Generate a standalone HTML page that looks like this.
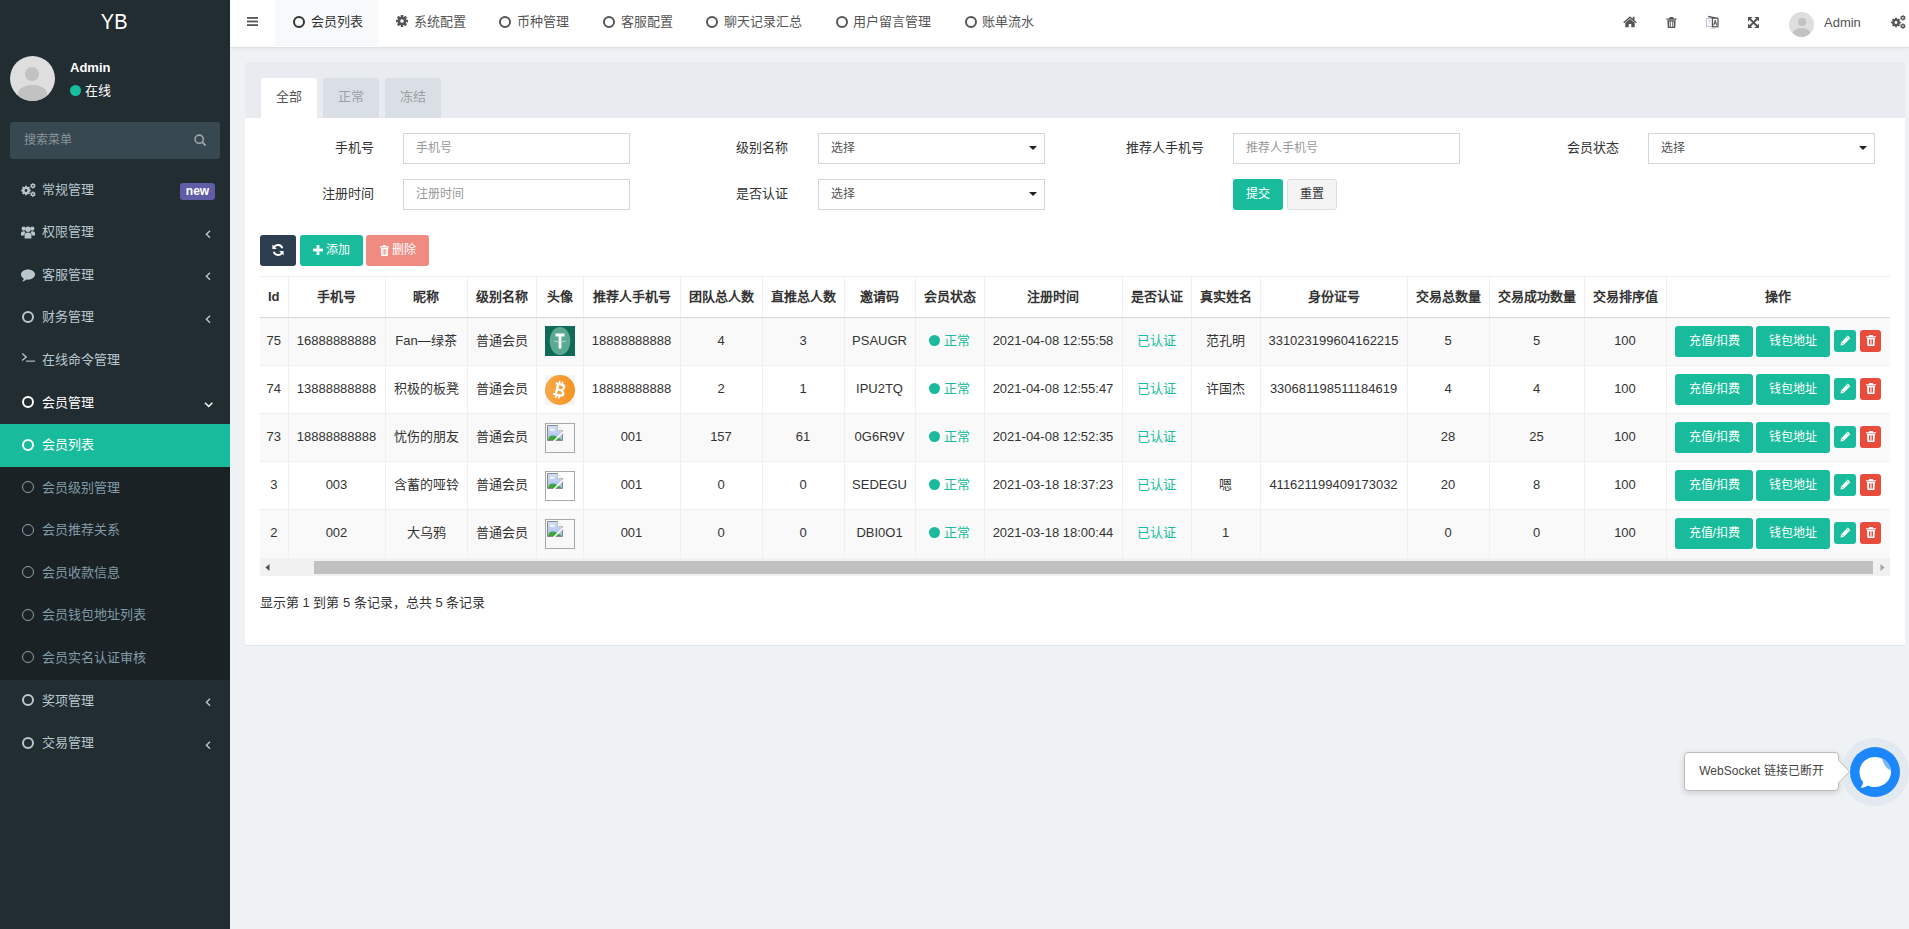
<!DOCTYPE html>
<html lang="zh-CN"><head><meta charset="utf-8"><title>YB</title>
<style>
*{box-sizing:border-box;margin:0;padding:0}
html,body{width:1909px;height:929px;overflow:hidden}
body{font-family:"Liberation Sans",sans-serif;font-size:13px;line-height:1.42857;color:#333;background:#eff2f5;position:relative}
.abs{position:absolute}
/* sidebar */
#side{position:absolute;left:0;top:0;width:230px;height:929px;background:#222d32}
#logo{position:absolute;left:0;top:0;width:228.4px;height:45px;line-height:45px;text-align:center;color:#fff;font-size:20px}
#uimg{position:absolute;left:10px;top:56px;width:45px;height:45px;border-radius:50%;background:#dedede;overflow:hidden}
#uimg .h{position:absolute;left:15px;top:11px;width:14px;height:14px;border-radius:50%;background:#c2c2c2}
#uimg .b{position:absolute;left:8px;top:29px;width:29px;height:17px;border-radius:50%;background:#c2c2c2}
#uname{position:absolute;left:70px;top:59px;color:#fff;font-weight:bold;font-size:13px;line-height:18px}
#ustat{position:absolute;left:70px;top:81.5px;color:#fff;font-size:13px;line-height:18px}
#ustat i{display:inline-block;width:11px;height:11px;border-radius:50%;background:#18bc9c;margin-right:4px;vertical-align:-1px}
#search{position:absolute;left:10px;top:122px;width:210px;height:37px;background:#374850;border-radius:3px}
#search span{position:absolute;left:14px;top:9px;color:#8a9498;font-size:12px;line-height:18px}
#menu{position:absolute;left:0;top:168.8px;width:230px}
.mi{position:relative;height:42.57px;line-height:42.57px;color:#b8c7ce;font-size:13px;padding-left:42px}
.mi .ic{position:absolute;left:21px;top:0;width:14px;height:42.57px}
.ring{position:absolute;left:1px;top:14.5px;width:12px;height:12px;border:2.2px solid #b8c7ce;border-radius:50%}
.mi .arr{position:absolute;left:204.5px;top:0;width:8px;height:42.57px}
.sub{background:#1a2226}
.sub .mi{color:#819aa5}
.sub .ring{border-color:#8aa4af;border-width:1.8px}
.mi.act{background:#18bc9c;color:#fff}
.mi.act .ring{border-color:#fff}
.mi.open{color:#fff}
.mi.open .ring{border-color:#fff}
.badge{position:absolute;right:15px;top:14.5px;width:35px;height:17px;border-radius:3px;background:#605ca8;color:#fff;font-weight:bold;font-size:12px;line-height:17px;text-align:center}
/* header */
#hdr{position:absolute;left:230px;top:0;width:1679px;height:48px;background:#fff;border-bottom:1px solid #dde2e7;box-shadow:0 1px 4px rgba(0,0,0,.05);z-index:2}
#hdr .tab{position:absolute;top:0;height:46px;line-height:42px;color:#555;font-size:13px}
#hdr .tab .ring{border-color:#555;border-width:2px;width:12px;height:12px;top:15.5px;left:0}
#hdr .tab span{position:absolute;top:1px;white-space:nowrap}
/* content */
#panel{position:absolute;left:245px;top:62px;width:1660px;height:583px;background:#fff;border-radius:2px;overflow:hidden;box-shadow:0 1px 1px rgba(0,0,0,.06)}
#phead{position:absolute;left:0;top:0;width:1660px;height:56px;background:#e8ecf0}
.ptab{position:absolute;top:16px;width:56px;height:40px;line-height:37px;text-align:center;background:#d9dfe5;color:#9aa0a6;border-radius:3px 3px 0 0;font-size:13px}
.ptab.on{background:#fff;color:#555}
.lbl{position:absolute;width:150px;text-align:right;font-size:13px;line-height:18px;color:#333}
.inp{position:absolute;width:227px;height:31px;border:1px solid #d2d6de;background:#fff;font-size:12px;line-height:28px;padding-left:12px;color:#999}
.inp.sel{color:#555}
.caret{position:absolute;right:7px;top:12px;width:0;height:0;border-left:4px solid transparent;border-right:4px solid transparent;border-top:4px solid #222}
.btn{position:absolute;border-radius:3px;color:#fff;font-size:12px;text-align:center}
/* table */
#tbl{position:absolute;left:15px;top:214px;border-collapse:collapse;table-layout:fixed}
#tbl th,#tbl td{border-left:1px solid #f0f0f0;text-align:center;white-space:nowrap;overflow:hidden;padding:0}
#tbl th:first-child,#tbl td:first-child{border-left:none}
#tbl th{height:41px;font-weight:bold;border-bottom:1px solid #d8d8d8;border-top:1px solid #eee}
#tbl td{height:48px;border-top:1px solid #f0f0f0}
#tbl tr.st td{background:#f9f9f9}
.g{color:#18bc9c}
.dot{display:inline-block;width:11px;height:11px;border-radius:50%;background:#18bc9c;margin-right:4px;vertical-align:-1px}
.av{display:inline-block;width:30px;height:30px;vertical-align:middle;position:relative;top:-1px}
.bk{border:1px solid #a8a8a8;background:transparent}
.ab{display:inline-block;vertical-align:middle;height:31px;line-height:31px;border-radius:3px;background:#18bc9c;color:#fff;font-size:12px}
.ax{display:inline-block;vertical-align:middle;width:22px;height:22px;border-radius:3px;position:relative;top:-1px}
#scroll{position:absolute;left:15px;top:496px;width:1630px;height:18px;background:#f1f1f1}
#thumb{position:absolute;left:54px;top:3px;width:1559px;height:13px;background:#c1c1c1}
#foot{position:absolute;left:15px;top:531.5px;font-size:13px;line-height:18px;color:#333}
/* chat */
#tip{position:absolute;left:1684px;top:752px;width:155px;height:39px;background:#fff;border:1px solid #bdbdbd;border-radius:4px;box-shadow:0 2px 6px rgba(0,0,0,.15);font-size:12px;line-height:36px;color:#444;text-align:center}
</style></head><body>
<div id="side">
  <div id="logo"><span style="display:inline-block;transform:scaleY(1.07);transform-origin:50% 29px">YB</span></div>
  <div id="uimg"><div class="h"></div><div class="b"></div></div>
  <div id="uname">Admin</div>
  <div id="ustat"><i></i>在线</div>
  <div id="search"><span>搜索菜单</span><svg class="abs" style="left:184px;top:11.5px" width="13" height="13" viewBox="0 0 13 13"><circle cx="5.2" cy="5.2" r="4.1" fill="none" stroke="#9ea5a8" stroke-width="1.6"/><path d="M8.2 8.2 L11.6 11.6" stroke="#9ea5a8" stroke-width="1.9"/></svg></div>
  <div id="menu">
    <div class="mi"><div class="ic"><svg class="abs" style="left:0px;top:14px" width="15" height="14" viewBox="0 0 15 14"><path fill-rule="evenodd" fill="#b8c7ce" d="M3.85 4.09 L4.20 2.67 L5.80 2.67 L6.15 4.09 L6.60 4.28 L7.85 3.51 L8.99 4.65 L8.22 5.90 L8.41 6.35 L9.83 6.70 L9.83 8.30 L8.41 8.65 L8.22 9.10 L8.99 10.35 L7.85 11.49 L6.60 10.72 L6.15 10.91 L5.80 12.33 L4.20 12.33 L3.85 10.91 L3.40 10.72 L2.15 11.49 L1.01 10.35 L1.78 9.10 L1.59 8.65 L0.17 8.30 L0.17 6.70 L1.59 6.35 L1.78 5.90 L1.01 4.65 L2.15 3.51 L3.40 4.28 Z M6.4 7.5 A1.4 1.4 0 1 0 3.6 7.5 A1.4 1.4 0 1 0 6.4 7.5 Z"/><path fill-rule="evenodd" fill="#b8c7ce" d="M11.05 1.09 L11.25 0.18 L12.55 0.18 L12.75 1.09 L13.05 1.26 L13.93 0.97 L14.58 2.10 L13.89 2.73 L13.89 3.07 L14.58 3.70 L13.93 4.83 L13.05 4.54 L12.75 4.71 L12.55 5.62 L11.25 5.62 L11.05 4.71 L10.75 4.54 L9.87 4.83 L9.22 3.70 L9.91 3.07 L9.91 2.73 L9.22 2.10 L9.87 0.97 L10.75 1.26 Z M12.7 2.9 A0.8 0.8 0 1 0 11.1 2.9 A0.8 0.8 0 1 0 12.7 2.9 Z"/><path fill-rule="evenodd" fill="#b8c7ce" d="M11.05 9.29 L11.25 8.38 L12.55 8.38 L12.75 9.29 L13.05 9.46 L13.93 9.17 L14.58 10.30 L13.89 10.93 L13.89 11.27 L14.58 11.90 L13.93 13.03 L13.05 12.74 L12.75 12.91 L12.55 13.82 L11.25 13.82 L11.05 12.91 L10.75 12.74 L9.87 13.03 L9.22 11.90 L9.91 11.27 L9.91 10.93 L9.22 10.30 L9.87 9.17 L10.75 9.46 Z M12.7 11.1 A0.8 0.8 0 1 0 11.1 11.1 A0.8 0.8 0 1 0 12.7 11.1 Z"/></svg></div>常规管理<div class="badge">new</div></div>
    <div class="mi"><div class="ic"><svg class="abs" style="left:0;top:14px" width="14" height="14" viewBox="0 0 14 14"><g fill="#b8c7ce"><circle cx="2.7" cy="3.6" r="2.1"/><circle cx="11.3" cy="3.6" r="2.1"/><path d="M0 10.5 V8.5 Q0 6.3 2.7 6.3 Q3.9 6.3 4.5 6.9 Q3.4 8.2 3.4 10.5 Z"/><path d="M14 10.5 V8.5 Q14 6.3 11.3 6.3 Q10.1 6.3 9.5 6.9 Q10.6 8.2 10.6 10.5 Z"/><circle cx="7" cy="4.3" r="2.7"/><path d="M3.6 13.5 V10.8 Q3.6 7.6 7 7.6 Q10.4 7.6 10.4 10.8 V13.5 Z"/></g></svg></div>权限管理<div class="arr"><svg width="6" height="9" viewBox="0 0 6 9" style="position:absolute;left:0;top:18.5px"><path d="M5 0.8 L1.4 4.3 L5 7.8" fill="none" stroke="#b8c7ce" stroke-width="1.4"/></svg></div></div>
    <div class="mi"><div class="ic"><svg class="abs" style="left:0;top:15px" width="14" height="13" viewBox="0 0 14 13"><path d="M7 0.5 C10.9 0.5 14 2.8 14 5.6 C14 8.4 10.9 10.7 7 10.7 C6.5 10.7 6 10.7 5.5 10.6 C4.4 11.7 2.8 12.3 1 12.4 C1.9 11.6 2.6 10.7 2.7 9.6 C1.1 8.7 0 7.2 0 5.6 C0 2.8 3.1 0.5 7 0.5 Z" fill="#b8c7ce"/></svg></div>客服管理<div class="arr"><svg width="6" height="9" viewBox="0 0 6 9" style="position:absolute;left:0;top:18.5px"><path d="M5 0.8 L1.4 4.3 L5 7.8" fill="none" stroke="#b8c7ce" stroke-width="1.4"/></svg></div></div>
    <div class="mi"><div class="ic"><div class="ring"></div></div>财务管理<div class="arr"><svg width="6" height="9" viewBox="0 0 6 9" style="position:absolute;left:0;top:18.5px"><path d="M5 0.8 L1.4 4.3 L5 7.8" fill="none" stroke="#b8c7ce" stroke-width="1.4"/></svg></div></div>
    <div class="mi"><div class="ic"><svg class="abs" style="left:0;top:13px" width="15" height="10" viewBox="0 0 15 10"><path d="M1.2 1.5 L5.2 5 L1.2 8.5" fill="none" stroke="#b8c7ce" stroke-width="1.3"/><rect x="5" y="8.6" width="9" height="1.1" fill="#b8c7ce"/></svg></div>在线命令管理</div>
    <div class="mi open"><div class="ic"><div class="ring"></div></div>会员管理<div class="arr"><svg width="10" height="6" viewBox="0 0 10 6" style="position:absolute;left:-1px;top:20px"><path d="M1 0.8 L4.7 4.5 L8.4 0.8" fill="none" stroke="#fff" stroke-width="1.4"/></svg></div></div>
    <div class="mi act"><div class="ic"><div class="ring"></div></div>会员列表</div>
    <div class="sub">
      <div class="mi"><div class="ic"><div class="ring"></div></div>会员级别管理</div>
      <div class="mi"><div class="ic"><div class="ring"></div></div>会员推荐关系</div>
      <div class="mi"><div class="ic"><div class="ring"></div></div>会员收款信息</div>
      <div class="mi"><div class="ic"><div class="ring"></div></div>会员钱包地址列表</div>
      <div class="mi"><div class="ic"><div class="ring"></div></div>会员实名认证审核</div>
    </div>
    <div class="mi"><div class="ic"><div class="ring"></div></div>奖项管理<div class="arr"><svg width="6" height="9" viewBox="0 0 6 9" style="position:absolute;left:0;top:18.5px"><path d="M5 0.8 L1.4 4.3 L5 7.8" fill="none" stroke="#b8c7ce" stroke-width="1.4"/></svg></div></div>
    <div class="mi"><div class="ic"><div class="ring"></div></div>交易管理<div class="arr"><svg width="6" height="9" viewBox="0 0 6 9" style="position:absolute;left:0;top:18.5px"><path d="M5 0.8 L1.4 4.3 L5 7.8" fill="none" stroke="#b8c7ce" stroke-width="1.4"/></svg></div></div>
  </div>
</div>
<div id="hdr">
  <svg class="abs" style="left:17px;top:17px" width="11" height="9" viewBox="0 0 11 9"><rect x="0" y="0" width="11" height="1.8" fill="#555"/><rect x="0" y="3.6" width="11" height="1.8" fill="#555"/><rect x="0" y="7.2" width="11" height="1.8" fill="#555"/></svg>
  <div class="abs" style="left:45px;top:0;width:103px;height:46px;background:#f8f9fa"></div>
  <div class="tab" style="left:62.7px"><div class="ring" style="border-color:#333"></div><span style="left:18px;color:#333">会员列表</span></div>
  <div class="tab" style="left:166px"><svg class="abs" style="left:0;top:15px" width="12" height="12" viewBox="0 0 12 12"><g fill="#555"><circle cx="6" cy="6" r="4.2"/><rect x="4.7" y="0" width="2.6" height="12" rx=".4"/><rect x="0" y="4.7" width="12" height="2.6" rx=".4"/><rect x="4.7" y="0" width="2.6" height="12" rx=".4" transform="rotate(45 6 6)"/><rect x="4.7" y="0" width="2.6" height="12" rx=".4" transform="rotate(-45 6 6)"/></g><circle cx="6" cy="6" r="1.8" fill="#fff"/></svg><span style="left:18px">系统配置</span></div>
  <div class="tab" style="left:269.4px"><div class="ring"></div><span style="left:18px">币种管理</span></div>
  <div class="tab" style="left:373px"><div class="ring"></div><span style="left:17.6px">客服配置</span></div>
  <div class="tab" style="left:476px"><div class="ring"></div><span style="left:17.6px">聊天记录汇总</span></div>
  <div class="tab" style="left:605.6px"><div class="ring"></div><span style="left:17.4px">用户留言管理</span></div>
  <div class="tab" style="left:734.7px"><div class="ring"></div><span style="left:17.6px">账单流水</span></div>
  <!-- right icons -->
  <svg class="abs" style="left:1393px;top:16px" width="14" height="12" viewBox="0 0 14 12"><path d="M7 0.3 L0.2 6.2 L1.2 7.2 L7 2.2 L12.8 7.2 L13.8 6.2 L11.5 4.2 L11.5 0.8 L9.8 0.8 L9.8 2.7 Z" fill="#555"/><path d="M2.3 6.8 L7 2.9 L11.7 6.8 L11.7 11.2 L8.3 11.2 L8.3 8 L5.7 8 L5.7 11.2 L2.3 11.2 Z" fill="#555"/></svg>
  <svg class="abs" style="left:1436px;top:17px" width="11" height="11" viewBox="0 0 11 11"><path d="M3.8 0 H7.2 L7.8 1.5 H10.6 V2.8 H0.4 V1.5 H3.2 Z" fill="#555"/><path d="M1.3 3.3 H9.7 L9.2 10.4 Q9.1 11 8.5 11 H2.5 Q1.9 11 1.8 10.4 Z" fill="#555"/><rect x="3.3" y="4.5" width="1" height="5.3" fill="#fff"/><rect x="5" y="4.5" width="1" height="5.3" fill="#fff"/><rect x="6.7" y="4.5" width="1" height="5.3" fill="#fff"/></svg>
  <svg class="abs" style="left:1476px;top:15px" width="13" height="15" viewBox="0 0 13 15"><rect x="0.6" y="3.6" width="6" height="8" fill="#fff" stroke="#b4b0e0" stroke-width=".8"/><path d="M2.2 0.8 L10.5 2.6 L10.5 3.8 L2.2 2.2 Z" fill="#555"/><rect x="6.4" y="3.2" width="5.6" height="8.6" fill="#f4f4f4" stroke="#555" stroke-width="1.2"/><path d="M7.6 10.3 L9.2 5.2 L10.8 10.3" fill="none" stroke="#555" stroke-width="1"/><path d="M8.2 8.6 H10.2" stroke="#555" stroke-width=".8"/><path d="M2.5 5.5 L4.5 5.5 M3.5 4.8 V7 M2.4 9.5 L4.7 7.2" stroke="#b8b0d8" stroke-width=".6" fill="none"/><path d="M4 13.6 H9.2" stroke="#c8c8d8" stroke-width=".8"/></svg>
  <svg class="abs" style="left:1518px;top:17px" width="11" height="11" viewBox="0 0 11 11"><g fill="#555"><path d="M0 0 H4.6 L0 4.6 Z"/><path d="M11 0 V4.6 L6.4 0 Z"/><path d="M0 11 V6.4 L4.6 11 Z"/><path d="M11 11 H6.4 L11 6.4 Z"/></g><path d="M1.5 1.5 L9.5 9.5 M9.5 1.5 L1.5 9.5" stroke="#555" stroke-width="1.9"/></svg>
  <div class="abs" style="left:1559px;top:12px;width:25px;height:25px;border-radius:50%;background:#dedede;overflow:hidden"><div class="abs" style="left:8.5px;top:6px;width:8px;height:8px;border-radius:50%;background:#c2c2c2"></div><div class="abs" style="left:4px;top:16px;width:17px;height:10px;border-radius:50%;background:#c2c2c2"></div></div>
  <div class="abs" style="left:1594px;top:14px;line-height:18px;color:#555;font-size:13px">Admin</div>
  <svg class="abs" style="left:1661px;top:15px" width="15" height="14" viewBox="0 0 15 14"><path fill-rule="evenodd" fill="#555" d="M3.85 4.09 L4.20 2.67 L5.80 2.67 L6.15 4.09 L6.60 4.28 L7.85 3.51 L8.99 4.65 L8.22 5.90 L8.41 6.35 L9.83 6.70 L9.83 8.30 L8.41 8.65 L8.22 9.10 L8.99 10.35 L7.85 11.49 L6.60 10.72 L6.15 10.91 L5.80 12.33 L4.20 12.33 L3.85 10.91 L3.40 10.72 L2.15 11.49 L1.01 10.35 L1.78 9.10 L1.59 8.65 L0.17 8.30 L0.17 6.70 L1.59 6.35 L1.78 5.90 L1.01 4.65 L2.15 3.51 L3.40 4.28 Z M6.4 7.5 A1.4 1.4 0 1 0 3.6 7.5 A1.4 1.4 0 1 0 6.4 7.5 Z"/><path fill-rule="evenodd" fill="#555" d="M11.05 1.09 L11.25 0.18 L12.55 0.18 L12.75 1.09 L13.05 1.26 L13.93 0.97 L14.58 2.10 L13.89 2.73 L13.89 3.07 L14.58 3.70 L13.93 4.83 L13.05 4.54 L12.75 4.71 L12.55 5.62 L11.25 5.62 L11.05 4.71 L10.75 4.54 L9.87 4.83 L9.22 3.70 L9.91 3.07 L9.91 2.73 L9.22 2.10 L9.87 0.97 L10.75 1.26 Z M12.7 2.9 A0.8 0.8 0 1 0 11.1 2.9 A0.8 0.8 0 1 0 12.7 2.9 Z"/><path fill-rule="evenodd" fill="#555" d="M11.05 9.29 L11.25 8.38 L12.55 8.38 L12.75 9.29 L13.05 9.46 L13.93 9.17 L14.58 10.30 L13.89 10.93 L13.89 11.27 L14.58 11.90 L13.93 13.03 L13.05 12.74 L12.75 12.91 L12.55 13.82 L11.25 13.82 L11.05 12.91 L10.75 12.74 L9.87 13.03 L9.22 11.90 L9.91 11.27 L9.91 10.93 L9.22 10.30 L9.87 9.17 L10.75 9.46 Z M12.7 11.1 A0.8 0.8 0 1 0 11.1 11.1 A0.8 0.8 0 1 0 12.7 11.1 Z"/></svg>
</div>
<div id="panel">
  <div id="phead">
    <div class="ptab on" style="left:16px">全部</div>
    <div class="ptab" style="left:78px">正常</div>
    <div class="ptab" style="left:140px">冻结</div>
  </div>
<div class="lbl" style="left:-21.5px;top:77.0px">手机号</div>
<div class="lbl" style="left:393.3px;top:77.0px">级别名称</div>
<div class="lbl" style="left:808.5px;top:77.0px">推荐人手机号</div>
<div class="lbl" style="left:1223.6px;top:77.0px">会员状态</div>
<div class="lbl" style="left:-21.5px;top:123.0px">注册时间</div>
<div class="lbl" style="left:393.3px;top:123.0px">是否认证</div>
<div class="inp" style="left:158px;top:71px">手机号</div>
<div class="inp sel" style="left:573px;top:71px">选择<i class="caret"></i></div>
<div class="inp" style="left:988px;top:71px">推荐人手机号</div>
<div class="inp sel" style="left:1403px;top:71px">选择<i class="caret"></i></div>
<div class="inp" style="left:158px;top:117px">注册时间</div>
<div class="inp sel" style="left:573px;top:117px">选择<i class="caret"></i></div>
<div class="btn" style="left:988px;top:117px;width:50px;height:31px;line-height:31px;background:#18bc9c">提交</div>
<div class="btn" style="left:1042px;top:117px;width:50px;height:31px;line-height:29px;background:#f4f4f4;border:1px solid #ddd;color:#333">重置</div>
<div class="btn" style="left:15px;top:173px;width:36px;height:31px;background:#2c3e50"><svg class="abs" style="left:12px;top:9px" width="12" height="12" viewBox="0 0 12 12"><path d="M10.3 4.2 A4.6 4.6 0 0 0 1.9 3.4" fill="none" stroke="#fff" stroke-width="1.9"/><path d="M0.4 0.6 L0.4 5 L4.8 5 Z" fill="#fff"/><path d="M1.7 7.8 A4.6 4.6 0 0 0 10.1 8.6" fill="none" stroke="#fff" stroke-width="1.9"/><path d="M11.6 11.4 L11.6 7 L7.2 7 Z" fill="#fff"/></svg></div>
<div class="btn" style="left:55px;top:173px;width:63px;height:31px;line-height:31px;background:#18bc9c"><svg class="abs" style="left:12.5px;top:10px" width="10" height="10" viewBox="0 0 10 10"><rect x="3.6" y="0" width="2.8" height="10" fill="#fff"/><rect x="0" y="3.6" width="10" height="2.8" fill="#fff"/></svg><span class="abs" style="left:26px;top:0">添加</span></div>
<div class="btn" style="left:121px;top:173px;width:63px;height:31px;line-height:31px;background:#ef8b80"><svg class="abs" style="left:13.5px;top:10px" width="9" height="11" viewBox="0 0 9 11"><path d="M3 0 H6 L6.5 1.3 H9 V2.5 H0 V1.3 H2.5 Z" fill="#fff"/><path d="M0.8 3 H8.2 L7.8 10.3 Q7.7 11 7 11 H2 Q1.3 11 1.2 10.3 Z" fill="#fff"/><rect x="2.7" y="4.2" width=".8" height="5.3" fill="#ef8b80"/><rect x="4.1" y="4.2" width=".8" height="5.3" fill="#ef8b80"/><rect x="5.5" y="4.2" width=".8" height="5.3" fill="#ef8b80"/></svg><span class="abs" style="left:26px;top:0">删除</span></div>
<table id="tbl"><colgroup><col style="width:28px"><col style="width:97px"><col style="width:82px"><col style="width:69px"><col style="width:47px"><col style="width:97px"><col style="width:82px"><col style="width:82px"><col style="width:71px"><col style="width:69px"><col style="width:138px"><col style="width:69px"><col style="width:69px"><col style="width:147px"><col style="width:82px"><col style="width:95px"><col style="width:82px"><col style="width:224px"></colgroup><thead><tr><th>Id</th><th>手机号</th><th>昵称</th><th>级别名称</th><th>头像</th><th>推荐人手机号</th><th>团队总人数</th><th>直推总人数</th><th>邀请码</th><th>会员状态</th><th>注册时间</th><th>是否认证</th><th>真实姓名</th><th>身份证号</th><th>交易总数量</th><th>交易成功数量</th><th>交易排序值</th><th>操作</th></tr></thead><tbody><tr class="st"><td>75</td><td>16888888888</td><td>Fan—绿茶</td><td>普通会员</td><td><span class="av" style="background:#0f6b57"><svg class="abs" style="left:0;top:0" width="30" height="30" viewBox="0 0 30 30"><ellipse cx="15" cy="15" rx="10.3" ry="14" fill="#5aa990"/><path d="M10.5 7.6 H19.5 V10.6 H16.4 V22.5 H13.6 V10.6 H10.5 Z" fill="#f4faf7"/><path d="M9 15 Q15 17.5 21 15" fill="none" stroke="#cfe8df" stroke-width=".8"/></svg></span></td><td>18888888888</td><td>4</td><td>3</td><td>PSAUGR</td><td><span class="g"><i class="dot"></i>正常</span></td><td>2021-04-08 12:55:58</td><td><span class="g">已认证</span></td><td>范孔明</td><td>331023199604162215</td><td>5</td><td>5</td><td>100</td><td><span class="ab" style="width:78px">充值/扣费</span> <span class="ab" style="width:74px;margin-left:-0.6px">钱包地址</span> <span class="ax" style="background:#18bc9c;margin-left:0.4px"><svg class="abs" style="left:5.5px;top:5.5px" width="11" height="11" viewBox="0 0 11 11"><path d="M7.8 0.6 L10.4 3.2 L3.6 10 L0.6 10.4 L1 7.4 Z" fill="#fff"/><path d="M1.8 7.6 L3.4 9.2" stroke="#18bc9c" stroke-width=".7"/><path d="M6.6 1.8 L9.2 4.4" stroke="#18bc9c" stroke-width=".7"/></svg></span> <span class="ax" style="background:#e74c3c;width:21px;margin-left:0.4px"><svg class="abs" style="left:5.5px;top:5px" width="10" height="11" viewBox="0 0 10 11"><path d="M3.3 0 H6.7 L7.2 1.3 H10 V2.6 H0 V1.3 H2.8 Z" fill="#fff"/><path d="M1 3.1 H9 L8.6 10.3 Q8.5 11 7.8 11 H2.2 Q1.5 11 1.4 10.3 Z" fill="#fff"/><rect x="3" y="4.3" width=".9" height="5.3" fill="#e74c3c"/><rect x="4.55" y="4.3" width=".9" height="5.3" fill="#e74c3c"/><rect x="6.1" y="4.3" width=".9" height="5.3" fill="#e74c3c"/></svg></span></td></tr><tr><td>74</td><td>13888888888</td><td>积极的板凳</td><td>普通会员</td><td><span class="av" style="background:#f4f4f4;top:0"><svg class="abs" style="left:0;top:0" width="30" height="30" viewBox="0 0 30 30"><defs><linearGradient id="org" x1="0" y1="0" x2="1" y2="0"><stop offset="0" stop-color="#f6a94b"/><stop offset="1" stop-color="#f7931e"/></linearGradient></defs><circle cx="15" cy="15" r="15" fill="url(#org)"/><g transform="translate(15.3 15) rotate(14) translate(-4.8 -6.5)" fill="#fff"><path fill-rule="evenodd" d="M-1.3 0 H5.5 C8 0 9 1.3 9 3.1 C9 4.6 8.2 5.6 7 6.1 C8.7 6.6 9.7 7.9 9.7 9.6 C9.7 11.8 8.1 13 5.6 13 H-1.3 V11 H0.2 V2 H-1.3 Z M2.6 2.2 V5.5 H5 C6 5.5 6.5 4.8 6.5 3.8 C6.5 2.8 6 2.2 5 2.2 Z M2.6 7.6 V10.8 H5.3 C6.5 10.8 7.1 10.1 7.1 9.2 C7.1 8.2 6.5 7.6 5.3 7.6 Z"/><rect x="1.3" y="-2.2" width="1.7" height="2.6"/><rect x="4.3" y="-2.2" width="1.7" height="2.6"/><rect x="1.3" y="12.6" width="1.7" height="2.6"/><rect x="4.3" y="12.6" width="1.7" height="2.6"/></g></svg></span></td><td>18888888888</td><td>2</td><td>1</td><td>IPU2TQ</td><td><span class="g"><i class="dot"></i>正常</span></td><td>2021-04-08 12:55:47</td><td><span class="g">已认证</span></td><td>许国杰</td><td>330681198511184619</td><td>4</td><td>4</td><td>100</td><td><span class="ab" style="width:78px">充值/扣费</span> <span class="ab" style="width:74px;margin-left:-0.6px">钱包地址</span> <span class="ax" style="background:#18bc9c;margin-left:0.4px"><svg class="abs" style="left:5.5px;top:5.5px" width="11" height="11" viewBox="0 0 11 11"><path d="M7.8 0.6 L10.4 3.2 L3.6 10 L0.6 10.4 L1 7.4 Z" fill="#fff"/><path d="M1.8 7.6 L3.4 9.2" stroke="#18bc9c" stroke-width=".7"/><path d="M6.6 1.8 L9.2 4.4" stroke="#18bc9c" stroke-width=".7"/></svg></span> <span class="ax" style="background:#e74c3c;width:21px;margin-left:0.4px"><svg class="abs" style="left:5.5px;top:5px" width="10" height="11" viewBox="0 0 10 11"><path d="M3.3 0 H6.7 L7.2 1.3 H10 V2.6 H0 V1.3 H2.8 Z" fill="#fff"/><path d="M1 3.1 H9 L8.6 10.3 Q8.5 11 7.8 11 H2.2 Q1.5 11 1.4 10.3 Z" fill="#fff"/><rect x="3" y="4.3" width=".9" height="5.3" fill="#e74c3c"/><rect x="4.55" y="4.3" width=".9" height="5.3" fill="#e74c3c"/><rect x="6.1" y="4.3" width=".9" height="5.3" fill="#e74c3c"/></svg></span></td></tr><tr class="st"><td>73</td><td>18888888888</td><td>忧伤的朋友</td><td>普通会员</td><td><span class="av bk" style="top:0"><svg class="abs" style="left:1px;top:1px" width="17" height="17" viewBox="0 0 17 17"><defs><linearGradient id="sky" x1="0" y1="0" x2="0" y2="1"><stop offset="0" stop-color="#d3e0f5"/><stop offset="1" stop-color="#9fbde9"/></linearGradient></defs><path d="M0.5 0.5 H10.5 L15.5 5.5 V15.5 H0.5 Z" fill="url(#sky)" stroke="#8a8a8a" stroke-width="1"/><path d="M10.5 0.5 V5.5 H15.5" fill="#fff" stroke="#8a8a8a" stroke-width="1"/><path d="M10.5 0.5 L15.5 5.5 H10.5 Z" fill="#fff"/><ellipse cx="5.3" cy="4.8" rx="2.4" ry="1.1" fill="#fff"/><path d="M1 15 Q2.5 9.5 7.5 10.8 Q10 11.5 15 15 Z" fill="#3da33a"/><path d="M6.5 16.5 L16.5 6.5" stroke="#fafafa" stroke-width="1.6"/></svg></span></td><td>001</td><td>157</td><td>61</td><td>0G6R9V</td><td><span class="g"><i class="dot"></i>正常</span></td><td>2021-04-08 12:52:35</td><td><span class="g">已认证</span></td><td></td><td></td><td>28</td><td>25</td><td>100</td><td><span class="ab" style="width:78px">充值/扣费</span> <span class="ab" style="width:74px;margin-left:-0.6px">钱包地址</span> <span class="ax" style="background:#18bc9c;margin-left:0.4px"><svg class="abs" style="left:5.5px;top:5.5px" width="11" height="11" viewBox="0 0 11 11"><path d="M7.8 0.6 L10.4 3.2 L3.6 10 L0.6 10.4 L1 7.4 Z" fill="#fff"/><path d="M1.8 7.6 L3.4 9.2" stroke="#18bc9c" stroke-width=".7"/><path d="M6.6 1.8 L9.2 4.4" stroke="#18bc9c" stroke-width=".7"/></svg></span> <span class="ax" style="background:#e74c3c;width:21px;margin-left:0.4px"><svg class="abs" style="left:5.5px;top:5px" width="10" height="11" viewBox="0 0 10 11"><path d="M3.3 0 H6.7 L7.2 1.3 H10 V2.6 H0 V1.3 H2.8 Z" fill="#fff"/><path d="M1 3.1 H9 L8.6 10.3 Q8.5 11 7.8 11 H2.2 Q1.5 11 1.4 10.3 Z" fill="#fff"/><rect x="3" y="4.3" width=".9" height="5.3" fill="#e74c3c"/><rect x="4.55" y="4.3" width=".9" height="5.3" fill="#e74c3c"/><rect x="6.1" y="4.3" width=".9" height="5.3" fill="#e74c3c"/></svg></span></td></tr><tr><td>3</td><td>003</td><td>含蓄的哑铃</td><td>普通会员</td><td><span class="av bk" style="top:0"><svg class="abs" style="left:1px;top:1px" width="17" height="17" viewBox="0 0 17 17"><defs><linearGradient id="sky" x1="0" y1="0" x2="0" y2="1"><stop offset="0" stop-color="#d3e0f5"/><stop offset="1" stop-color="#9fbde9"/></linearGradient></defs><path d="M0.5 0.5 H10.5 L15.5 5.5 V15.5 H0.5 Z" fill="url(#sky)" stroke="#8a8a8a" stroke-width="1"/><path d="M10.5 0.5 V5.5 H15.5" fill="#fff" stroke="#8a8a8a" stroke-width="1"/><path d="M10.5 0.5 L15.5 5.5 H10.5 Z" fill="#fff"/><ellipse cx="5.3" cy="4.8" rx="2.4" ry="1.1" fill="#fff"/><path d="M1 15 Q2.5 9.5 7.5 10.8 Q10 11.5 15 15 Z" fill="#3da33a"/><path d="M6.5 16.5 L16.5 6.5" stroke="#fafafa" stroke-width="1.6"/></svg></span></td><td>001</td><td>0</td><td>0</td><td>SEDEGU</td><td><span class="g"><i class="dot"></i>正常</span></td><td>2021-03-18 18:37:23</td><td><span class="g">已认证</span></td><td>嗯</td><td>411621199409173032</td><td>20</td><td>8</td><td>100</td><td><span class="ab" style="width:78px">充值/扣费</span> <span class="ab" style="width:74px;margin-left:-0.6px">钱包地址</span> <span class="ax" style="background:#18bc9c;margin-left:0.4px"><svg class="abs" style="left:5.5px;top:5.5px" width="11" height="11" viewBox="0 0 11 11"><path d="M7.8 0.6 L10.4 3.2 L3.6 10 L0.6 10.4 L1 7.4 Z" fill="#fff"/><path d="M1.8 7.6 L3.4 9.2" stroke="#18bc9c" stroke-width=".7"/><path d="M6.6 1.8 L9.2 4.4" stroke="#18bc9c" stroke-width=".7"/></svg></span> <span class="ax" style="background:#e74c3c;width:21px;margin-left:0.4px"><svg class="abs" style="left:5.5px;top:5px" width="10" height="11" viewBox="0 0 10 11"><path d="M3.3 0 H6.7 L7.2 1.3 H10 V2.6 H0 V1.3 H2.8 Z" fill="#fff"/><path d="M1 3.1 H9 L8.6 10.3 Q8.5 11 7.8 11 H2.2 Q1.5 11 1.4 10.3 Z" fill="#fff"/><rect x="3" y="4.3" width=".9" height="5.3" fill="#e74c3c"/><rect x="4.55" y="4.3" width=".9" height="5.3" fill="#e74c3c"/><rect x="6.1" y="4.3" width=".9" height="5.3" fill="#e74c3c"/></svg></span></td></tr><tr class="st"><td>2</td><td>002</td><td>大乌鸦</td><td>普通会员</td><td><span class="av bk" style="top:0"><svg class="abs" style="left:1px;top:1px" width="17" height="17" viewBox="0 0 17 17"><defs><linearGradient id="sky" x1="0" y1="0" x2="0" y2="1"><stop offset="0" stop-color="#d3e0f5"/><stop offset="1" stop-color="#9fbde9"/></linearGradient></defs><path d="M0.5 0.5 H10.5 L15.5 5.5 V15.5 H0.5 Z" fill="url(#sky)" stroke="#8a8a8a" stroke-width="1"/><path d="M10.5 0.5 V5.5 H15.5" fill="#fff" stroke="#8a8a8a" stroke-width="1"/><path d="M10.5 0.5 L15.5 5.5 H10.5 Z" fill="#fff"/><ellipse cx="5.3" cy="4.8" rx="2.4" ry="1.1" fill="#fff"/><path d="M1 15 Q2.5 9.5 7.5 10.8 Q10 11.5 15 15 Z" fill="#3da33a"/><path d="M6.5 16.5 L16.5 6.5" stroke="#fafafa" stroke-width="1.6"/></svg></span></td><td>001</td><td>0</td><td>0</td><td>DBI0O1</td><td><span class="g"><i class="dot"></i>正常</span></td><td>2021-03-18 18:00:44</td><td><span class="g">已认证</span></td><td>1</td><td></td><td>0</td><td>0</td><td>100</td><td><span class="ab" style="width:78px">充值/扣费</span> <span class="ab" style="width:74px;margin-left:-0.6px">钱包地址</span> <span class="ax" style="background:#18bc9c;margin-left:0.4px"><svg class="abs" style="left:5.5px;top:5.5px" width="11" height="11" viewBox="0 0 11 11"><path d="M7.8 0.6 L10.4 3.2 L3.6 10 L0.6 10.4 L1 7.4 Z" fill="#fff"/><path d="M1.8 7.6 L3.4 9.2" stroke="#18bc9c" stroke-width=".7"/><path d="M6.6 1.8 L9.2 4.4" stroke="#18bc9c" stroke-width=".7"/></svg></span> <span class="ax" style="background:#e74c3c;width:21px;margin-left:0.4px"><svg class="abs" style="left:5.5px;top:5px" width="10" height="11" viewBox="0 0 10 11"><path d="M3.3 0 H6.7 L7.2 1.3 H10 V2.6 H0 V1.3 H2.8 Z" fill="#fff"/><path d="M1 3.1 H9 L8.6 10.3 Q8.5 11 7.8 11 H2.2 Q1.5 11 1.4 10.3 Z" fill="#fff"/><rect x="3" y="4.3" width=".9" height="5.3" fill="#e74c3c"/><rect x="4.55" y="4.3" width=".9" height="5.3" fill="#e74c3c"/><rect x="6.1" y="4.3" width=".9" height="5.3" fill="#e74c3c"/></svg></span></td></tr></tbody></table>
<div id="scroll"><svg class="abs" style="left:5px;top:6px" width="5" height="7" viewBox="0 0 5 7"><path d="M4.5 0 L0.5 3.5 L4.5 7 Z" fill="#505050"/></svg><div id="thumb"></div><svg class="abs" style="right:5px;top:6px" width="5" height="7" viewBox="0 0 5 7"><path d="M0.5 0 L4.5 3.5 L0.5 7 Z" fill="#a3a3a3"/></svg></div>
<div id="foot">显示第 1 到第 5 条记录，总共 5 条记录</div>
</div>
<div id="tip">WebSocket 链接已断开</div>
<div class="abs" style="left:1841px;top:738px;width:68px;height:68px;border-radius:50%;background:#e3e9f1"></div>
<svg class="abs" style="left:1838px;top:759px" width="13" height="25" viewBox="0 0 13 25"><path d="M0 0.5 L11.5 12.5 L0 24.5 Z" fill="#fff"/><path d="M0 0.5 L11.5 12.5 L0 24.5" fill="none" stroke="#bdbdbd" stroke-width="1"/></svg>
<div class="abs" style="left:1850px;top:747px;width:50px;height:50px;border-radius:50%;background:#1b87fb;overflow:hidden">
<svg class="abs" style="left:0;top:0" width="50" height="50" viewBox="0 0 50 50"><path d="M25 10 C33.5 10 41 16.5 41 25 C41 33.5 33.5 40 25 40 C22.5 40 20 39.5 18 38.5 C16 40 13 41 10.5 40.5 C12 39 13 37 13 35 C10.5 32 9.5 28.5 9.5 25 C9.5 16.5 16.5 10 25 10 Z" fill="#fff"/><path d="M32 11.5 C37 13.5 40.5 18 41 23 C37.5 22.5 34 19 32 11.5 Z" fill="#7db5f7"/></svg></div>
</body></html>
